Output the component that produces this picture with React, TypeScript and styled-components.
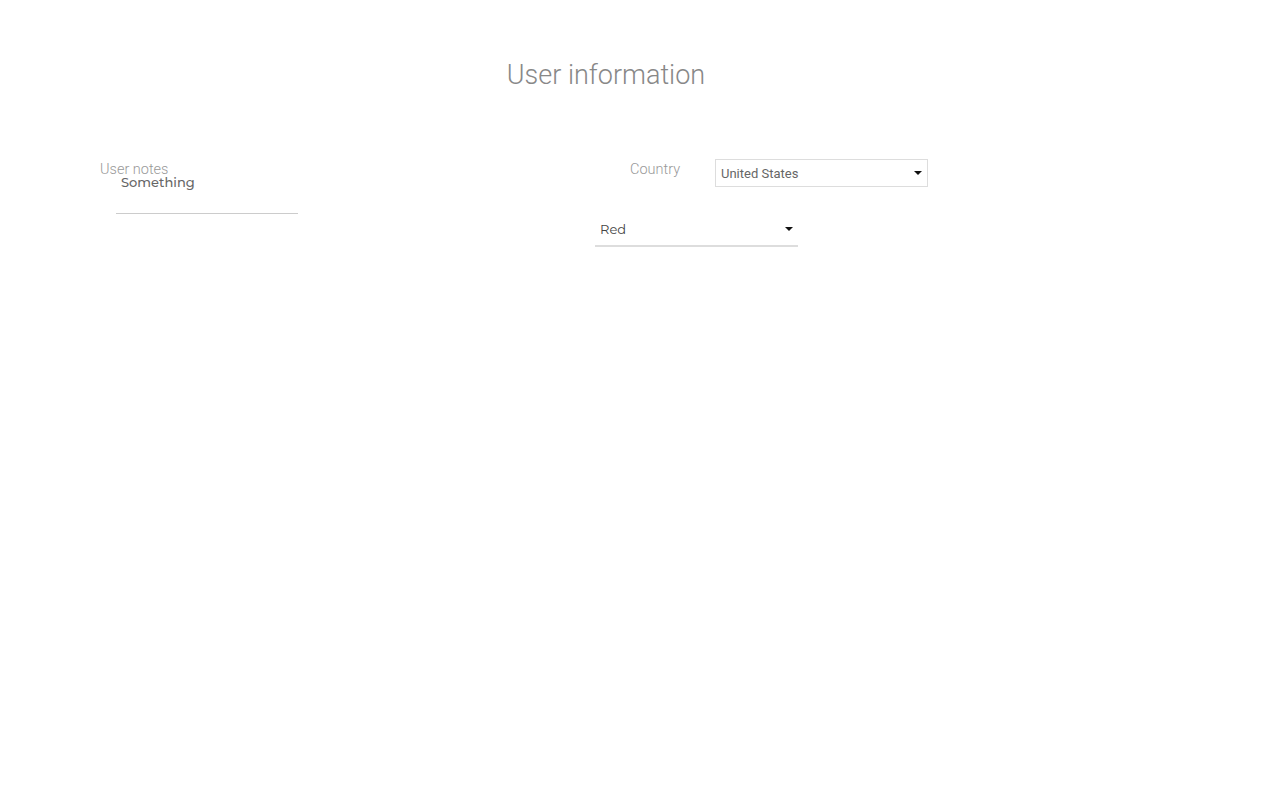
import React from 'react';
import styled, { createGlobalStyle } from 'styled-components';

const GlobalStyle = createGlobalStyle`
  body {
    margin: 0;
    background: #fff;
    font-family: Roboto, "Liberation Sans", sans-serif;
  }
`;

const Page = styled.div`
  width: 1012px;
  margin-left: 100px;
  padding-top: 59px;
`;

const Title = styled.h1`
  margin: 0;
  text-align: center;
  font-family: Roboto, sans-serif;
  font-weight: 300;
  font-size: 27px;
  line-height: 32px;
  color: #888;
`;

const Columns = styled.div`
  display: flex;
  margin-top: 70px;
`;

const LeftColumn = styled.div`
  width: 495px;
  display: flex;
  flex-direction: column;
`;

const RightColumn = styled.div`
  display: flex;
  flex-direction: column;
`;

const Label = styled.label<{ $indent?: number; $width?: number }>`
  font-family: Roboto, sans-serif;
  font-weight: 300;
  font-size: 14.5px;
  line-height: 18px;
  color: #999;
  padding-left: ${p => p.$indent ?? 0}px;
  width: ${p => (p.$width ? `${p.$width}px` : 'auto')};
  box-sizing: border-box;
  flex-shrink: 0;
`;

const Notes = styled.textarea`
  margin: -5px 0 0 16px;
  width: 182px;
  height: 40px;
  border: none;
  border-bottom: 1px solid #ccc;
  background: transparent;
  padding: 0 5px;
  resize: none;
  outline: none;
  font-family: Montserrat, "DejaVu Sans", sans-serif;
  font-weight: 500;
  font-size: 13px;
  line-height: 16px;
  color: #666;
  box-sizing: border-box;
`;

const FieldRow = styled.div`
  display: flex;
  align-items: flex-start;
`;

const BoxSelect = styled.div`
  width: 213px;
  height: 28px;
  border: 1px solid #ddd;
  box-sizing: border-box;
  margin-top: -2px;
  display: flex;
  align-items: center;
  justify-content: space-between;
  padding: 0 5px;
  font-family: Roboto, sans-serif;
  font-size: 13px;
  color: #666;
`;

const LineSelect = styled.div`
  width: 203px;
  height: 32px;
  margin-top: 28px;
  border-bottom: 2px solid #ddd;
  box-sizing: border-box;
  display: flex;
  align-items: center;
  justify-content: space-between;
  padding: 0 5px 2px;
  font-family: Montserrat, "DejaVu Sans", sans-serif;
  font-size: 13px;
  color: #444;
`;

const Caret = styled.span`
  width: 0;
  height: 0;
  border-left: 4px solid transparent;
  border-right: 4px solid transparent;
  border-top: 4px solid #111;
`;

const App = () => {
  return (
    <>
      <GlobalStyle />
      <Page>
        <Title>User information</Title>
        <Columns>
          <LeftColumn>
            <Label>User notes</Label>
            <Notes defaultValue="Something" />
          </LeftColumn>
          <RightColumn>
            <FieldRow>
              <Label $indent={35} $width={120}>Country</Label>
              <BoxSelect>
                United States
                <Caret />
              </BoxSelect>
            </FieldRow>
            <LineSelect>
              Red
              <Caret />
            </LineSelect>
          </RightColumn>
        </Columns>
      </Page>
    </>
  );
};

export default App;
